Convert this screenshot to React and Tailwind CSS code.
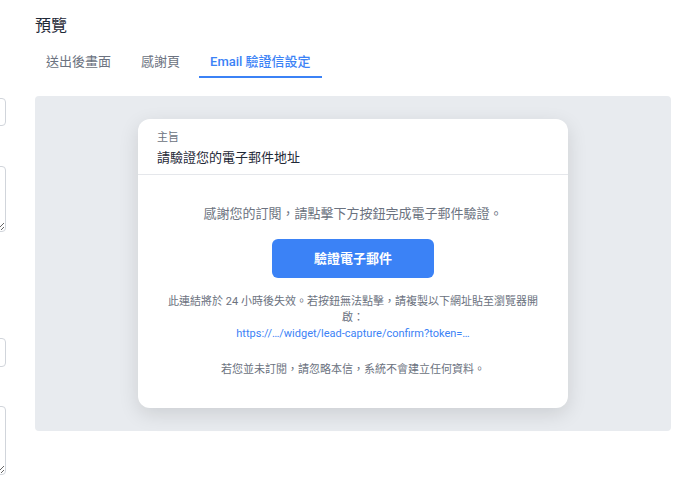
import React from "react";

const tabs = ["送出後畫面", "感謝頁", "Email 驗證信設定"];

export default function App() {
    const active = 2;

    return (
        <div className="w-[694px] h-[483px] bg-white overflow-hidden flex font-[Roboto,'Noto_Sans_CJK_TC',sans-serif]">
            {/* left form column, mostly scrolled out of view */}
            <div className="w-[6px] shrink-0 overflow-hidden flex flex-col">
                <input className="mt-[98px] ml-[-294px] w-[300px] h-[28px] border border-[#d1d5db] rounded-[4px] shrink-0" />
                <textarea className="mt-[40px] ml-[-294px] w-[300px] h-[66px] border border-[#d1d5db] rounded-[4px] shrink-0" />
                <input className="mt-[106px] ml-[-294px] w-[300px] h-[29px] border border-[#d1d5db] rounded-[4px] shrink-0" />
                <textarea className="mt-[39px] ml-[-294px] w-[300px] h-[69px] border border-[#d1d5db] rounded-[4px] shrink-0" />
            </div>

            <div className="ml-[29px] w-[636px] shrink-0">
                <h2 className="pt-[14px] text-[16px] leading-[24px] text-[#1f2937]">預覽</h2>

                <div className="mt-[6px] flex gap-[8px]">
                    {tabs.map((t, i) => (
                        <div
                            key={t}
                            className={
                                i === active
                                    ? "px-[11px] pt-[8px] pb-[4px] text-[13px] leading-[20px] border-b-2 border-[#3b82f6] text-[#3b82f6] font-medium"
                                    : "px-[11px] pt-[8px] pb-[4px] text-[13px] leading-[20px] border-b-2 border-transparent text-[#6b7280]"
                            }
                        >
                            {t}
                        </div>
                    ))}
                </div>

                <div className="mt-[18px] bg-[#e8ebef] rounded-[4px] py-[23px] flex justify-center">
                    <div className="w-[430px] bg-white rounded-[12px] shadow-[0_6px_20px_rgba(0,0,0,0.12)]">
                        <div className="px-[19px] pt-[11px] pb-[6px] border-b border-[#e5e7eb]">
                            <div className="text-[11px] leading-[16px] text-[#6b7280]">主旨</div>
                            <div className="mt-[2px] text-[13px] leading-[20px] text-[#1f2937]">請驗證您的電子郵件地址</div>
                        </div>

                        <div className="px-[28px] pt-[29px] pb-[30px] flex flex-col items-center text-center">
                            <p className="text-[13px] leading-[20px] text-[#6b7280]">感謝您的訂閱，請點擊下方按鈕完成電子郵件驗證。</p>
                            <button className="mt-[15px] w-[162px] h-[39px] rounded-[6px] bg-[#3b82f6] text-white text-[13px] font-bold">
                                驗證電子郵件
                            </button>
                            <p className="mt-[16px] text-[11px] leading-[16px] text-[#6b7280]">
                                此連結將於 24 小時後失效。若按鈕無法點擊，請複製以下網址貼至瀏覽器開啟：
                                <br />
                                <span className="text-[#3b82f6]">https://…/widget/lead-capture/confirm?token=…</span>
                            </p>
                            <p className="mt-[20px] text-[11px] leading-[16px] text-[#6b7280]">若您並未訂閱，請忽略本信，系統不會建立任何資料。</p>
                        </div>
                    </div>
                </div>
            </div>
        </div>
    );
}
